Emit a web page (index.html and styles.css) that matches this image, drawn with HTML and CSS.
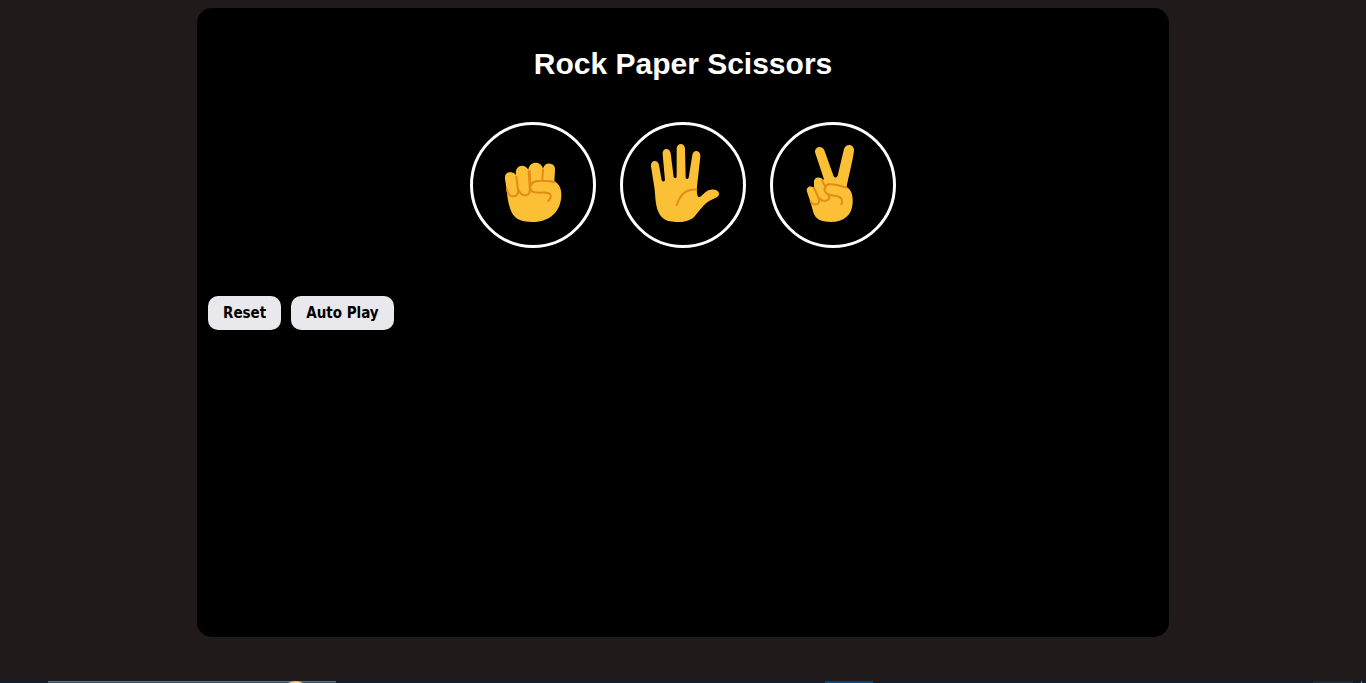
FILE: index.html
```html
<!DOCTYPE html>
<html lang="en">
<head>
<meta charset="utf-8">
<meta name="viewport" content="width=device-width, initial-scale=1">
<title>Rock Paper Scissors</title>
<link rel="stylesheet" href="styles.css">
</head>
<body>
<main class="game">
  <h1 class="title">Rock Paper Scissors</h1>
  <div class="moves">
    <button class="move" type="button" aria-label="Rock">
      <svg class="hand" viewBox="24 21 360 360" aria-hidden="true">
        <path class="skin" d="M120 182C118 167 129 161 139 163Q147 164 153 171C150 154 159 143 171 143Q183 143 190 155C192 141 201 134 212 134C224 134 232 142 234 152C238 139 247 136 255 137C267 138 271 147 270 157L268 190C282 198 289 210 289 230C289 279 255 312 203 312C163 312 145 302 135 271C127 246 126 218 120 182Z"/>
        <path class="crease" d="M126 214C130 235 140 236 150 234C160 232 161 223 158 207L154 176M158 211C164 228 174 235 185 231C196 227 195 218 194 206L191 160M194 160L196 197M234 156L232 186M268 192C246 187 218 187 207 192C193 198 193 216 202 221C217 227 240 221 252 226C261 231 257 244 249 249"/>
      </svg>
    </button>
    <button class="move" type="button" aria-label="Paper">
      <svg class="hand" viewBox="24 21 360 360" aria-hidden="true">
        <path class="skin" d="M108 145C106 125 129 123 132 141L140 187Q145 194 150 187L143 109C141 89 164 87 167 106L176 178Q181 183 185 178L185 92C185 73 210 73 210 92L212 180Q217 186 221 179L232 111C235 92 258 97 256 116L246 206C244 231 249 241 256 236C264 230 275 215 288 215C301 214 311 219 312 226C313 235 304 239 293 244C263 257 254 281 238 296C223 310 200 313 182 312C147 310 137 298 129 279C120 258 121 226 118 208Z"/>
        <path class="crease" d="M185 261C193 237 207 219 226 216Q234 214 244 215"/>
      </svg>
    </button>
    <button class="move" type="button" aria-label="Scissors">
      <svg class="hand" viewBox="24 21 360 360" aria-hidden="true">
        <path class="skin" d="M151 106C145 87 170 79 178 97L206 175Q212 183 218 173L236 97C240 74 268 78 267 97C266 117 250 180 245 207C260 217 264 232 263 255C261 292 236 312 198 312C164 312 151 302 145 283L137 254L127 224C120 207 136 200 147 210L147 196C144 177 165 174 174 185L177 184Z"/>
        <path class="crease" d="M137 251C146 263 158 262 162 252C165 244 155 227 147 210M162 240C173 253 184 250 191 244Q195 239 190 230M172 189L182 209M243 209C223 202 207 196 191 199C177 202 175 218 184 226C196 236 212 229 225 238C232 243 233 252 229 259"/>
      </svg>
    </button>
  </div>
  <div class="actions">
    <button class="action" type="button">Reset</button>
    <button class="action" type="button">Auto Play</button>
  </div>
</main>
<footer class="taskbar" aria-hidden="true">
  <svg class="edge" viewBox="0 0 1366 2" preserveAspectRatio="none">
    <path fill="#0c1d31" d="M0 0H1366V2H0Z"/>
    <path fill="#354f68" d="M48 0H336V2H48Z"/>
    <path fill="#5c7488" d="M48 0H336V1H48Z"/>
    <path fill="#f1cd78" d="M288 2Q296 -2 303 2Z"/>
    <path fill="#07477a" d="M825 0H873V2H825Z"/>
    <path fill="#1c2b3a" d="M1313 0H1353V2H1313Z"/>
    <path fill="#75818c" d="M1361 0H1362V2H1361Z"/>
  </svg>
</footer>
</body>
</html>
```
FILE: styles.css
```css
* {
  box-sizing: border-box;
}

body {
  display: flex;
  flex-direction: column;
  align-items: center;
  min-height: 100vh;
  margin: 0;
  padding-top: 8px;
  background: #201a1a;
  color: #fff;
  font-family: Arial, "Liberation Sans", sans-serif;
}

.game {
  flex: 1;
  width: calc((100% - 16px) * 0.72);
  margin-bottom: 44px;
  padding: 38px 11px;
  border-radius: 15px;
  background: #000;
}

.title {
  margin: 0;
  font-size: 30px;
  line-height: 36px;
  text-align: center;
}

.moves {
  display: flex;
  justify-content: center;
  gap: 24px;
  margin-top: 40px;
}

.move {
  width: 126px;
  height: 126px;
  padding: 0;
  border: 3px solid #fff;
  border-radius: 50%;
  background: transparent;
  cursor: pointer;
}

.hand {
  display: block;
  width: 100%;
  height: 100%;
}

.skin {
  fill: #fbc036;
}

.crease {
  fill: none;
  stroke: #e48c15;
  stroke-width: 6;
  stroke-linecap: round;
  stroke-linejoin: round;
}

.actions {
  display: flex;
  gap: 10px;
  margin-top: 48px;
}

.action {
  height: 34px;
  padding: 0 15px;
  border: 0;
  border-radius: 10px;
  background: #e9e9ed;
  color: #000;
  font: bold 15px Tahoma, "DejaVu Sans Condensed", sans-serif;
  cursor: pointer;
}

.taskbar {
  width: 100%;
  height: 2px;
}

.edge {
  display: block;
  width: 100%;
  height: 2px;
}
```
